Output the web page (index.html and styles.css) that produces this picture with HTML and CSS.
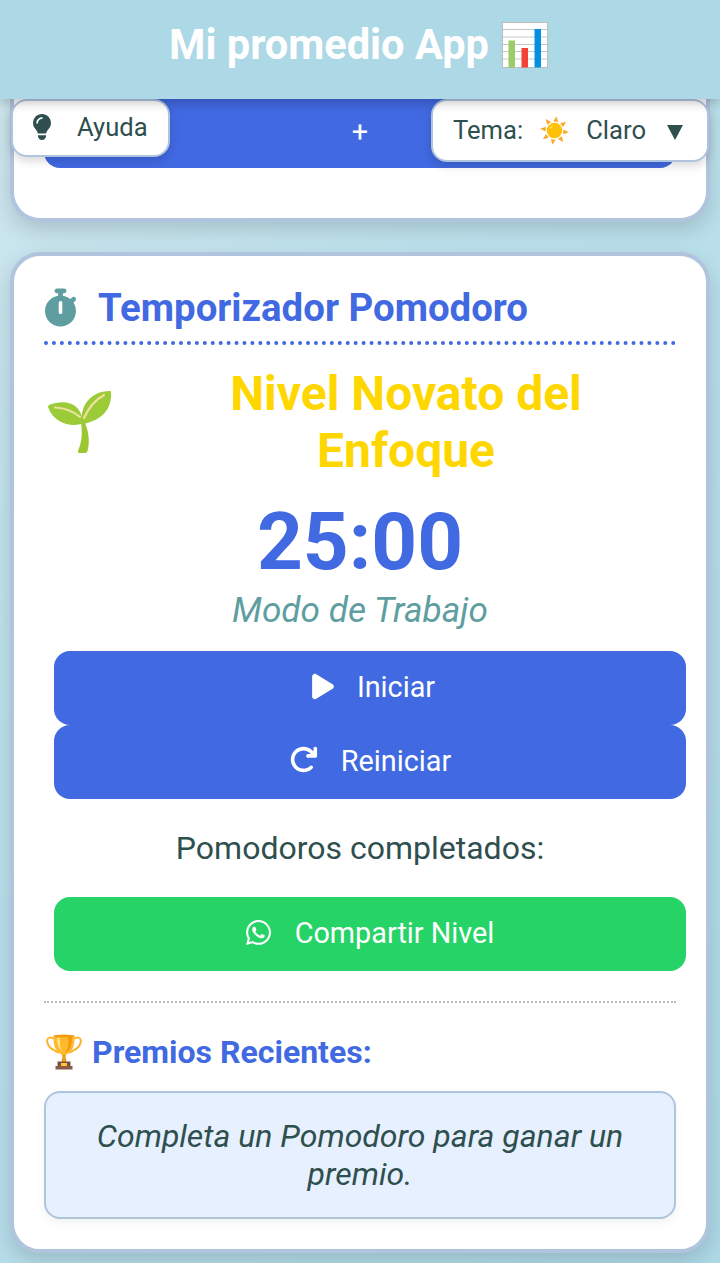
FILE: index.html
```html
<!DOCTYPE html>
<html lang="es">
<head>
    <meta charset="UTF-8">
    <meta name="viewport" content="width=device-width, initial-scale=1.0">
    <title>Mi promedio App</title>
    <link rel="stylesheet" href="styles.css">
</head>
<body>

<div class="app">
    <header class="header">
        <h1>Mi promedio App</h1>
        <svg class="chart-icon" viewBox="0 0 46 46">
            <rect x="0.5" y="0.5" width="45" height="45" fill="#fff" stroke="#bdbdbd"/>
            <path d="M1 7.500h44M1 15h44M1 22.500h44M1 29.500h44M1 37h44" stroke="#c4c8ca" stroke-width="1"/>
            <rect x="6.500" y="18.500" width="6.500" height="27" fill="#9ccc65"/>
            <rect x="19.500" y="26" width="6.500" height="19.500" fill="#f44336"/>
            <rect x="32.500" y="7" width="6.500" height="38.500" fill="#0690e0"/>
        </svg>
    </header>

    <button class="float-btn help-btn" type="button">
        <svg class="bulb-icon" viewBox="16 0 352 512" fill="currentColor"><path d="M272 384c9.600-31.900 29.500-59.100 49.200-86.200c5.200-7.100 10.400-14.200 15.400-21.400c19.800-28.500 31.400-63 31.400-100.300C368 78.800 289.200 0 192 0S16 78.800 16 176c0 37.300 11.600 71.900 31.400 100.300c5 7.200 10.200 14.300 15.400 21.400c19.800 27.100 39.700 54.400 49.200 86.200H272zM192 512c44.200 0 80-35.800 80-80V416H112v16c0 44.200 35.800 80 80 80zM112 176c0 8.800-7.200 16-16 16s-16-7.200-16-16c0-61.900 50.100-112 112-112c8.800 0 16 7.200 16 16s-7.200 16-16 16c-44.200 0-80 35.800-80 80z"/></svg>
        <span>Ayuda</span>
    </button>

    <div class="float-btn theme-btn">
        <span>Tema:</span>
        <svg class="sun-icon" viewBox="0 0 28 28">
            <g fill="#f9a825" transform="rotate(8 14 14)">
                <path id="ray" d="M14 0l2.300 5.400h-4.600z"/>
                <use href="#ray" transform="rotate(45 14 14)"/>
                <use href="#ray" transform="rotate(90 14 14)"/>
                <use href="#ray" transform="rotate(135 14 14)"/>
                <use href="#ray" transform="rotate(180 14 14)"/>
                <use href="#ray" transform="rotate(225 14 14)"/>
                <use href="#ray" transform="rotate(270 14 14)"/>
                <use href="#ray" transform="rotate(315 14 14)"/>
            </g>
            <circle cx="14" cy="14" r="7.500" fill="#ffc107"/>
            <ellipse cx="10.800" cy="10.800" rx="1.800" ry="1" fill="#ffe04a" transform="rotate(-40 10.800 10.800)"/>
        </svg>
        <span>Claro</span>
        <span class="caret"></span>
    </div>

    <main class="content">
        <section class="card card-top">
            <button class="btn add-btn" type="button">+</button>
        </section>

        <section class="card">
            <h2 class="card-title">
                <svg class="stopwatch-icon" viewBox="16 0 416 512" fill="currentColor"><path d="M176 0c-17.700 0-32 14.300-32 32s14.300 32 32 32h16V98.400C92.300 113.800 16 200 16 304c0 114.900 93.100 208 208 208s208-93.100 208-208c0-41.800-12.300-80.700-33.500-113.200l24.100-24.100c12.500-12.500 12.500-32.800 0-45.300s-32.800-12.500-45.300 0L355.700 143c-28.100-23-62.200-38.800-99.700-44.600V64h16c17.700 0 32-14.300 32-32s-14.300-32-32-32H176zm72 192V320c0 13.300-10.700 24-24 24s-24-10.700-24-24V192c0-13.300 10.700-24 24-24s24 10.700 24 24z"/></svg>
                <span>Temporizador Pomodoro</span>
            </h2>

            <div class="level">
                <svg class="plant-icon" viewBox="0 0 72 72">
                    <path d="M37 36C39 48 37 57 34 64Q33.500 66 36 66H41Q43 66 43.500 64C46 55 45 46 41 36z" fill="#9bc832"/>
                    <path d="M38 38C35 20 46 4 66 4Q67 4 67 5C68 20 60 33 39 37z" fill="#9bcb36"/>
                    <path d="M39 36C31 40 11 39 4 20Q4 19 5 18C21 12 37 15 39 36z" fill="#9bcb36"/>
                    <path d="M40 31C44 22 51 13 60 8M36 30C29 24 21 21 11 20.500" fill="none" stroke="#efe2a0" stroke-width="2.200" stroke-linecap="round"/>
                </svg>
                <div class="level-name">Nivel Novato del Enfoque</div>
            </div>

            <div class="timer">25:00</div>
            <div class="mode">Modo de Trabajo</div>

            <div class="actions">
                <button class="btn" type="button">
                    <svg class="play-icon" viewBox="0 0 384 512" fill="currentColor"><path d="M73 39c-14.800-9.100-33.400-9.400-48.500-.9S0 62.600 0 80V432c0 17.400 9.400 33.400 24.500 41.900s33.700 8.100 48.500-.9L361 297c14.300-8.700 23-24.200 23-41s-8.700-32.200-23-41L73 39z"/></svg>
                    <span>Iniciar</span>
                </button>
                <button class="btn" type="button">
                    <svg class="redo-icon" viewBox="0 0 512 512" fill="currentColor"><path d="M386.300 160H336c-17.700 0-32 14.300-32 32s14.300 32 32 32H464c17.700 0 32-14.300 32-32V64c0-17.700-14.300-32-32-32s-32 14.300-32 32v51.200L414.400 97.600c-87.500-87.500-229.300-87.500-316.800 0s-87.500 229.300 0 316.800s229.300 87.500 316.800 0c12.500-12.500 12.500-32.800 0-45.300s-32.800-12.500-45.300 0c-62.500 62.500-163.800 62.500-226.300 0s-62.500-163.800 0-226.300s163.800-62.500 226.300 0L386.300 160z"/></svg>
                    <span>Reiniciar</span>
                </button>
            </div>

            <p class="completed">Pomodoros completados:</p>

            <div class="actions">
                <button class="btn share-btn" type="button">
                    <svg class="whatsapp-icon" viewBox="0 0 448 512" fill="currentColor"><path d="M380.900 97.100C339 55.100 283.200 32 223.900 32c-122.400 0-222 99.600-222 222 0 39.100 10.200 77.300 29.600 111L0 480l117.700-30.900c32.400 17.700 68.900 27 106.100 27h.1c122.300 0 224.100-99.600 224.100-222 0-59.300-25.200-115-67.100-157zm-157 341.600c-33.200 0-65.700-8.900-94-25.700l-6.700-4-69.800 18.300L72 359.200l-4.400-7c-18.500-29.400-28.200-63.300-28.200-98.200 0-101.700 82.800-184.500 184.600-184.500 49.300 0 95.600 19.200 130.400 54.100 34.800 34.900 56.200 81.200 56.100 130.500 0 101.800-84.900 184.600-186.600 184.600zm101.200-138.200c-5.500-2.800-32.800-16.200-37.900-18-5.100-1.900-8.800-2.800-12.500 2.800-3.700 5.600-14.300 18-17.600 21.800-3.200 3.700-6.500 4.200-12 1.400-32.600-16.300-54-29.100-75.500-66-5.700-9.800 5.700-9.100 16.300-30.300 1.800-3.700.9-6.900-.5-9.700-1.400-2.800-12.500-30.100-17.100-41.200-4.500-10.800-9.100-9.300-12.500-9.500-3.200-.2-6.900-.2-10.600-.2-3.700 0-9.700 1.400-14.800 6.900-5.100 5.600-19.400 19-19.400 46.300 0 27.300 19.900 53.700 22.600 57.400 2.800 3.700 39.100 59.700 94.800 83.800 35.200 15.200 49 16.500 66.600 13.900 10.700-1.600 32.800-13.400 37.400-26.400 4.600-13 4.600-24.100 3.200-26.400-1.300-2.500-5-3.900-10.500-6.600z"/></svg>
                    <span>Compartir Nivel</span>
                </button>
            </div>

            <div class="awards">
                <h3 class="awards-title">
                    <svg class="trophy-icon" viewBox="0 0 36 36">
                        <path d="M8 5C4 2 0 4 1.500 9C3 15 8 16 13 19M28 5C32 2 36 4 34.500 9C33 15 28 16 23 19" fill="none" stroke="#fbb52b" stroke-width="2"/>
                        <path d="M15 19h6l-1.500 3 1 6h-5l1-6z" fill="#f39c12"/>
                        <path d="M7.500 1.500h21C29 12 26 20 18 21C10 20 7 12 7.500 1.500z" fill="#ffb92e"/>
                        <path d="M22 3h4C26 12 24 17 19 19C23 14 23 9 22 3z" fill="#f59a0c"/>
                        <path d="M11 4h3C14 10 14 13 16 17C12 14 11 9 11 4z" fill="#ffe082"/>
                        <ellipse cx="18" cy="2" rx="10.500" ry="1.500" fill="#f59b13"/>
                        <path d="M11.500 27.500h13v5h-13z" fill="#795046"/>
                        <path d="M9.500 32h17v3.500h-17z" fill="#8d5b4e"/>
                        <rect x="15" y="29" width="6" height="3" fill="#ffca28"/>
                    </svg>
                    <span>Premios Recientes:</span>
                </h3>
                <div class="award-box">Completa un Pomodoro para ganar un premio.</div>
            </div>
        </section>
    </main>
</div>

</body>
</html>
```
FILE: styles.css
```css
* {
    box-sizing: border-box;
}
body {
    margin: 0;
    background-color: #fff;
    color: #2f4f4f;
    font-family: Roboto, sans-serif;
    font-size: 32px;
    line-height: 1.2;
}
svg {
    display: block;
    flex: none;
}
button {
    font-family: inherit;
}
.app {
    position: relative;
    height: 1263px;
    overflow: hidden;
    background: linear-gradient(135deg, #d0e6ee 0%, #bce1ec 35%, #add8e6 100%);
}
.header {
    position: relative;
    z-index: 3;
    display: flex;
    justify-content: center;
    align-items: center;
    gap: 13px;
    height: 99px;
    padding: 0 3px 10px 0;
    background-color: #add8e6;
    box-shadow: 0 4px 10px rgba(0, 0, 0, 0.22);
}
.header h1 {
    margin: 0;
    color: #fff;
    font-size: 41.6px;
    font-weight: 700;
}
.chart-icon {
    width: 46px;
    height: 46px;
    margin-top: 1px;
}

/* floating controls under the header */
.float-btn {
    position: absolute;
    z-index: 2;
    top: 99px;
    display: flex;
    align-items: center;
    border: 2px solid #b0c4de;
    border-radius: 16px;
    background-color: #fff;
    color: #2f4f4f;
    font-size: 25.6px;
    box-shadow: 0 4px 10px rgba(0, 0, 0, 0.15);
}
.help-btn {
    left: 11px;
    width: 159px;
    height: 58px;
    padding: 0 20px 2px;
    gap: 26px;
}
.theme-btn {
    right: 11px;
    width: 278px;
    height: 63px;
    padding: 0 20px;
    gap: 17px;
}
.bulb-icon {
    width: 18px;
    height: 26px;
    margin-top: -1px;
}
.sun-icon {
    width: 29px;
    height: 29px;
}
.caret {
    margin: 3px 0 0 4px;
    border: 8px solid transparent;
    border-top: 15px solid #2f4f4f;
    border-bottom: 0;
}

.content {
    padding: 0 10px;
}
.card {
    margin-bottom: 30px;
    padding: 30px;
    border: 4px solid #b0c4de;
    border-radius: 30px;
    background-color: #fff;
    box-shadow: 0 8px 20px rgba(0, 0, 0, 0.15);
}
.card-top {
    height: 123px;
    padding-top: 0;
    border-top: 0;
    border-top-left-radius: 0;
    border-top-right-radius: 0;
}
.btn {
    display: flex;
    justify-content: center;
    align-items: center;
    gap: 24px;
    width: 632px;
    height: 74px;
    padding: 0 0 3px;
    border: 0;
    border-radius: 16px;
    background-color: #4169e1;
    color: #fff;
    font-size: 28.8px;
}
.add-btn {
    height: 69px;
    border-top-left-radius: 0;
    border-top-right-radius: 0;
}
.share-btn {
    background-color: #25d366;
}
.card-title {
    display: flex;
    align-items: flex-start;
    gap: 22px;
    height: 59px;
    margin: 0 0 20px;
    padding-left: 1px;
    border-bottom: 4px dotted #4169e1;
    color: #4169e1;
    font-size: 38.4px;
    line-height: 44px;
}
.stopwatch-icon {
    width: 31px;
    height: 39px;
    margin-top: 2px;
    color: #5f9ea0;
}
.level {
    display: flex;
    align-items: center;
    gap: 20px;
    height: 115px;
    margin-bottom: 14px;
}
.plant-icon {
    width: 72px;
    height: 72px;
}
.level-name {
    flex: 1;
    padding: 0 60px 2px;
    color: #ffd700;
    font-size: 48px;
    font-weight: 700;
    line-height: 57px;
    text-align: center;
}
.timer {
    color: #4169e1;
    font-size: 80px;
    font-weight: 700;
    text-align: center;
}
.mode {
    margin-bottom: 21px;
    color: #5f9ea0;
    font-size: 35.2px;
    font-style: italic;
    line-height: 40px;
    text-align: center;
}
.actions {
    margin-left: 10px;
}
.play-icon {
    width: 22px;
    height: 29px;
    margin: 0 -1px 0 7px;
}
.redo-icon {
    width: 29px;
    height: 29px;
    margin: -2px -1px 0 0;
}
.whatsapp-icon {
    width: 25px;
    height: 29px;
    margin-top: -1px;
}
.completed {
    margin: 30px 0;
    line-height: 38px;
    text-align: center;
}
.awards {
    margin-top: 30px;
    padding-top: 30px;
    border-top: 2px dotted #bbb;
}
.awards-title {
    display: flex;
    align-items: center;
    gap: 10px;
    margin: 0 0 20px;
    padding-left: 2px;
    color: #4169e1;
    font-size: 32px;
    line-height: 38px;
}
.trophy-icon {
    width: 36px;
    height: 36px;
}
.award-box {
    height: 128px;
    padding: 24px;
    border: 2px solid #b0c4de;
    border-radius: 16px;
    background-color: #e6f0ff;
    font-style: italic;
    line-height: 38px;
    text-align: center;
    box-shadow: 0 4px 10px rgba(0, 0, 0, 0.05);
}
```
